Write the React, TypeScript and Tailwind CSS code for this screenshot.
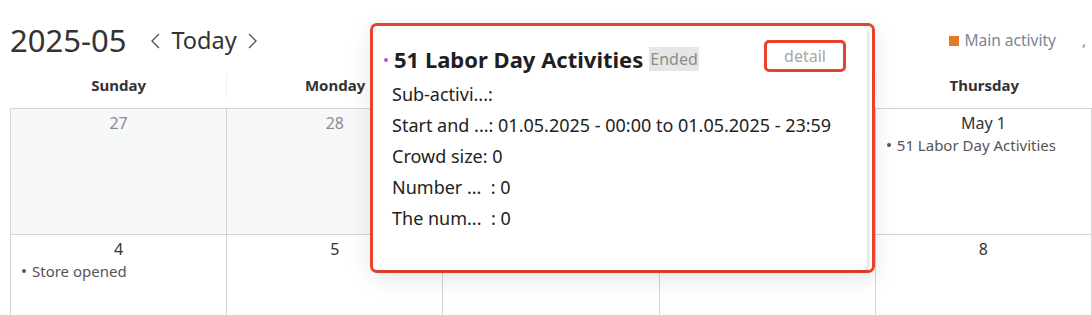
import React from 'react';

type Event = { title: string };
type Day = { label: string; muted: boolean; events: Event[] };

const weekdays = ['Sunday', 'Monday', 'Tuesday', 'Wednesday', 'Thursday'];

// 29 and 30 sit under the popover, so their labels are left out
const weeks: Day[][] = [
  [
    { label: '27', muted: true, events: [] },
    { label: '28', muted: true, events: [] },
    { label: '', muted: true, events: [] },
    { label: '', muted: true, events: [] },
    { label: 'May 1', muted: false, events: [{ title: '51 Labor Day Activities' }] },
  ],
  [
    { label: '4', muted: false, events: [{ title: 'Store opened' }] },
    { label: '5', muted: false, events: [] },
    { label: '6', muted: false, events: [] },
    { label: '7', muted: false, events: [] },
    { label: '8', muted: false, events: [] },
  ],
];

const details = [
  { label: 'Sub-activi...', value: '' },
  { label: 'Start and ...', value: ' 01.05.2025 - 00:00 to 01.05.2025 - 23:59' },
  { label: 'Crowd size', value: ' 0' },
  { label: 'Number ...  ', value: ' 0' },
  { label: 'The num...  ', value: ' 0' },
];

const Chevron: React.FC<{ dir: 'left' | 'right' }> = ({ dir }) => (
  <svg width="12" height="20" viewBox="0 0 12 20" fill="none" stroke="#555" strokeWidth="1.4">
    {dir === 'left' ? <polyline points="10,3 3,10 10,17" /> : <polyline points="2,3 9,10 2,17" />}
  </svg>
);

const App: React.FC = () => {
  return (
    <div className="relative w-[1092px] h-[315px] overflow-hidden bg-white font-['Noto_Sans','Liberation_Sans',sans-serif] text-[#222]">
      {/* toolbar */}
      <div className="flex items-center h-[70px] pt-[11px] pl-[10px] pr-[6px]">
        <span className="text-[31px] leading-none text-[#333]">2025-05</span>
        <div className="flex items-center ml-[23px] gap-[10px]">
          <Chevron dir="left" />
          <span className="text-[23.5px] leading-none text-[#333]">Today</span>
          <Chevron dir="right" />
        </div>
        <div className="ml-auto flex items-center">
          <span className="w-[10px] h-[10px] bg-[#e07b24] mr-[6px]" />
          <span className="text-[15.5px] text-[#7a8599]">Main activity</span>
          <span className="ml-[26px] text-[15px] text-[#7a8599]">,</span>
        </div>
      </div>

      {/* weekday header */}
      <div className="ml-[10px] w-[1082px] grid grid-cols-5 h-[30px] mb-[8px]">
        {weekdays.map((d, i) => (
          <div key={d} className="flex items-center">
            <div className={`w-px h-[24px] ${i === 0 ? 'bg-transparent' : 'bg-[#f0f0f0]'}`} />
            <div className="flex-1 text-center text-[15px] font-bold text-[#333]">{d}</div>
          </div>
        ))}
      </div>

      {/* month grid */}
      <div className="ml-[10px] w-[1082px] grid grid-cols-5 border-l border-t border-[#d4d4d4]">
        {weeks.flat().map((day, i) => (
          <div
            key={i}
            className={`h-[126px] border-r border-b border-[#d4d4d4] pt-[2px] ${day.muted ? 'bg-[#f7f8fa]' : 'bg-white'}`}
          >
            <div className={`h-[24px] text-center text-[16px] ${day.muted ? 'text-[#8c8c8c]' : 'text-[#333]'}`}>{day.label}</div>
            {day.events.map((e) => (
              <div key={e.title} className="flex items-center pl-[11px] text-[15px] leading-[20px] text-[#555]">
                <span className="w-[4px] h-[4px] rounded-full bg-[#555] mr-[6px]" />
                {e.title}
              </div>
            ))}
          </div>
        ))}
      </div>

      {/* popover */}
      <div className="absolute left-[370px] top-[23px] w-[505px] h-[250px] rounded-[7px] border-[3px] border-[#e8412c] shadow-[0_6px_24px_rgba(0,0,0,0.10)] bg-white">
        <div className="h-full w-[494px] bg-white rounded-[5px] shadow-[2px_2px_3px_rgba(0,0,0,0.12)] pl-[11px] pt-[16px]">
          <div className="flex items-center h-[34px]">
            <span className="w-[4px] h-[4px] rounded-full bg-[#a855f7] mr-[6px] mt-[2px]" />
            <span className="text-[22px] font-bold text-[#1f1f1f] leading-none">51 Labor Day Activities</span>
            <span className="ml-[6px] px-[1px] h-[24px] flex items-center bg-[#e6e6e6] text-[16px] text-[#8c8c8c]">Ended</span>
            <div className="ml-auto mr-[21px] -mt-[7px] w-[82px] h-[32px] rounded-[5px] border-[3px] border-[#e8412c] flex items-center justify-center text-[16px] text-[#a6a6a6]">
              detail
            </div>
          </div>
          <div className="pl-[8px] pt-[3px]">
            {details.map((d) => (
              <div key={d.label} className="h-[31px] flex items-center text-[18px] text-[#222] whitespace-pre">
                {d.label}:{d.value}
              </div>
            ))}
          </div>
        </div>
      </div>
    </div>
  );
};

export default App;
